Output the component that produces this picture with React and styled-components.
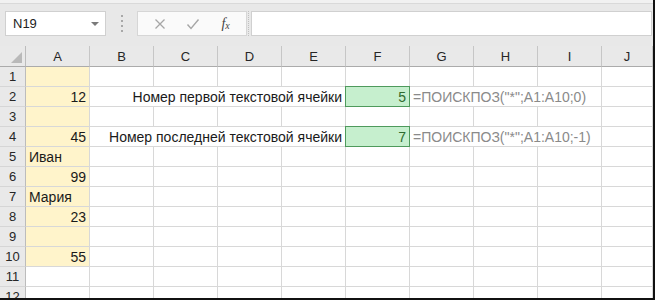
import React from 'react';
import styled, { createGlobalStyle, css } from 'styled-components';

const GlobalStyle = createGlobalStyle`
  body {
    margin: 0;
    background: #ffffff;
    font-family: "Liberation Sans", Arial, sans-serif;
  }
`;

const Frame = styled.div`
  width: 655px;
  height: 300px;
  box-sizing: border-box;
  border-right: 2px solid #111;
  border-bottom: 2px solid #111;
  overflow: hidden;
  background: #fff;
`;

const FormulaBar = styled.div`
  height: 46px;
  box-sizing: border-box;
  display: flex;
  align-items: flex-start;
  padding: 8px 1px 0 5px;
  background: #e8e8e8;
  border-top: 3px solid #f1f1f1;
  box-shadow: inset 0 1px 0 #d9d9d9;
`;

const NameBox = styled.div`
  width: 101px;
  height: 25px;
  box-sizing: border-box;
  display: flex;
  align-items: center;
  justify-content: space-between;
  padding: 0 6px 0 7px;
  background: #fff;
  border: 1px solid #d0d0d0;
  font-size: 13px;
  color: #222;
`;

const Caret = styled.span`
  width: 0;
  height: 0;
  border-left: 4px solid transparent;
  border-right: 4px solid transparent;
  border-top: 4px solid #7a7a7a;
`;

const Grip = styled.div`
  width: 31px;
  height: 25px;
  display: flex;
  flex-direction: column;
  align-items: center;
  justify-content: center;
  gap: 3px;

  span {
    width: 2px;
    height: 2px;
    background: #a8a8a8;
  }
`;

const FnButtons = styled.div`
  width: 110px;
  height: 25px;
  box-sizing: border-box;
  display: flex;
  align-items: center;
  justify-content: space-around;
  padding: 0 4px 0 6px;
  background: #fafafa;
  border: 1px solid #d6d6d6;
`;

const FnIcon = styled.span`
  width: 24px;
  display: flex;
  justify-content: center;
  align-items: center;
`;

const Fx = styled.span`
  font-family: "Liberation Serif", "Times New Roman", serif;
  font-style: italic;
  font-size: 14px;
  color: #444;

  sub {
    font-size: 10px;
    vertical-align: -1px;
  }
`;

const Divider = styled.div`
  width: 3px;
  height: 25px;
  border-left: 1px dotted #c0c0c0;
  box-sizing: border-box;
  margin-left: 1px;
`;

const FormulaInput = styled.div`
  flex: 1;
  height: 25px;
  box-sizing: border-box;
  background: #fff;
  border: 1px solid #d0d0d0;
`;

const Sheet = styled.div`
  display: grid;
  grid-template-columns: 26px repeat(9, 64px) 1fr;
  grid-template-rows: 21px;
  grid-auto-rows: 20px;
  font-size: 13px;
`;

const headerBase = css`
  box-sizing: border-box;
  background: #e9e9e9;
  color: #262626;
  display: flex;
  justify-content: center;
`;

const Corner = styled.div`
  ${headerBase};
  position: relative;
  border-right: 1px solid #bcbcbc;
  border-bottom: 1px solid #ababab;

  &::after {
    content: '';
    position: absolute;
    right: 3px;
    bottom: 3px;
    border-left: 11px solid transparent;
    border-bottom: 11px solid #b9b9b9;
  }
`;

const ColHead = styled.div`
  ${headerBase};
  align-items: flex-end;
  padding-bottom: 2px;
  border-right: 1px solid #c6c6c6;
  border-bottom: 1px solid #ababab;
`;

const RowHead = styled.div`
  ${headerBase};
  align-items: center;
  border-right: 1px solid #bcbcbc;
  border-bottom: 1px solid #d6d6d6;
`;

const fills = {
  yellow: '#fff4cb',
  green: '#c6efce',
};

const Cell = styled.div`
  box-sizing: border-box;
  grid-column: span ${(p) => p.$span || 1};
  display: flex;
  align-items: flex-end;
  justify-content: ${(p) => (p.$right ? 'flex-end' : 'flex-start')};
  padding: 0 3px 1px 3px;
  white-space: nowrap;
  font-size: 14px;
  line-height: 16px;
  background: ${(p) => fills[p.$fill] || '#fff'};
  color: ${(p) => (p.$muted ? '#8a8a8a' : p.$fill === 'green' ? '#2f6b2f' : '#1a1a1a')};
  border-right: 1px solid #d8d8d8;
  border-bottom: 1px solid #d8d8d8;

  ${(p) =>
    p.$fill === 'green' &&
    css`
      border: 1px solid #4e9a5c;
      margin: -1px 0 0 -1px;
      width: calc(100% + 1px);
      height: calc(100% + 1px);
    `}
`;

const columns = ['A', 'B', 'C', 'D', 'E', 'F', 'G', 'H', 'I', 'J'];
const colA = ['', '12', '', '45', 'Иван', '99', 'Мария', '23', '', '55', '', ''];

const special = {
  2: { label: 'Номер первой текстовой ячейки', result: '5', formula: '=ПОИСКПОЗ("*";A1:A10;0)' },
  4: { label: 'Номер последней текстовой ячейки', result: '7', formula: '=ПОИСКПОЗ("*";A1:A10;-1)' },
};

const isNumber = (v) => v !== '' && !isNaN(Number(v));

const Row = ({ n }) => {
  const a = colA[n - 1];
  const s = special[n];
  return (
    <>
      <RowHead>{n}</RowHead>
      <Cell $fill={n <= 10 ? 'yellow' : undefined} $right={isNumber(a)}>
        {a}
      </Cell>
      {s ? (
        <>
          <Cell $span={4} $right>
            {s.label}
          </Cell>
          <Cell $fill="green" $right>
            {s.result}
          </Cell>
          <Cell $span={3} $muted>
            {s.formula}
          </Cell>
          <Cell />
        </>
      ) : (
        columns.slice(1).map((c) => <Cell key={c} />)
      )}
    </>
  );
};

const App = () => (
  <>
    <GlobalStyle />
    <Frame>
      <FormulaBar>
        <NameBox>
          N19
          <Caret />
        </NameBox>
        <Grip>
          <span />
          <span />
          <span />
          <span />
        </Grip>
        <FnButtons>
          <FnIcon>
            <svg width="12" height="12" viewBox="0 0 12 12">
              <path d="M1.5 1.5l9 9M10.5 1.5l-9 9" stroke="#a6a6a6" strokeWidth="1.3" fill="none" />
            </svg>
          </FnIcon>
          <FnIcon>
            <svg width="14" height="12" viewBox="0 0 14 12">
              <path d="M1.5 6.5l3.5 4 7.5-9" stroke="#a6a6a6" strokeWidth="1.4" fill="none" />
            </svg>
          </FnIcon>
          <FnIcon>
            <Fx>
              f<sub>x</sub>
            </Fx>
          </FnIcon>
        </FnButtons>
        <Divider />
        <FormulaInput />
      </FormulaBar>
      <Sheet>
        <Corner />
        {columns.map((c) => (
          <ColHead key={c}>{c}</ColHead>
        ))}
        {Array.from({ length: 12 }, (_, i) => (
          <Row key={i} n={i + 1} />
        ))}
      </Sheet>
    </Frame>
  </>
);

export default App;
